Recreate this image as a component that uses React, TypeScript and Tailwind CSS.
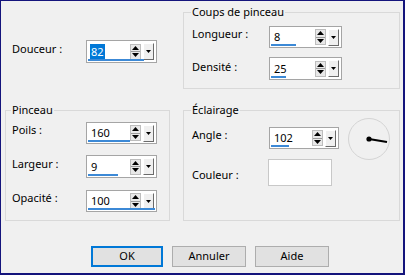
import React from 'react'

interface SpinProps {
  value: string
  bar: number
  className: string
  selected?: boolean
}

const Spin: React.FC<SpinProps> = ({ value, bar, className, selected }) => (
  <div className={`relative flex items-center border border-[#a5a5a5] bg-white pr-[2px] ${className}`}>
    <div className="flex flex-1 items-center pl-[3px] pb-[1px]">
      <span className={selected ? 'bg-[#0078d7] px-[1px] leading-[15px] text-white' : 'px-[1px] leading-[15px]'}>
        {value}
      </span>
    </div>
    <div className="flex h-[16px] w-[11px] flex-col border border-[#bdbdbd] bg-[#e8e8e8]">
      <div className="flex flex-1 items-center justify-center border-b border-[#9a9a9a]">
        <svg width="7" height="4" viewBox="0 0 7 4">
          <polygon points="0,4 3.5,0 7,4" fill="#000" />
        </svg>
      </div>
      <div className="flex flex-1 items-center justify-center">
        <svg width="7" height="4" viewBox="0 0 7 4">
          <polygon points="0,0 3.5,4 7,0" fill="#000" />
        </svg>
      </div>
    </div>
    <div className="ml-[2px] flex h-[17px] w-[11px] items-center justify-center border border-t-white border-l-white border-r-[#6b6b6b] border-b-[#6b6b6b] bg-[#f0f0f0]">
      <svg width="5" height="3" viewBox="0 0 5 3">
        <polygon points="0,0 2.5,3 5,0" fill="#000" />
      </svg>
    </div>
    <div className="absolute bottom-[1px] left-[1px] h-[2px] bg-[#3c89d6]" style={{ width: bar }} />
  </div>
)

const Group: React.FC<{ title: string; className: string; children: React.ReactNode }> = ({ title, className, children }) => (
  <fieldset className={`border border-[#d9d9d9] ${className}`}>
    <legend className="-ml-[1px] px-[1px] leading-[16px]">{title}</legend>
    {children}
  </fieldset>
)

export default function App() {
  return (
    <div
      className="h-[275px] w-[405px] border-t border-l border-r-2 border-b-2 border-[#14147c] bg-[#f0f0f0] text-[11px] text-black"
      style={{ fontFamily: '"Noto Sans", "Open Sans", sans-serif' }}
    >
      <div className="grid grid-cols-[165px_217px] gap-x-[13px] gap-y-[13px] pl-[4px] pt-[3px]">
        {/* Douceur */}
        <div className="flex items-start pl-[7px] pt-[36px]">
          <span className="w-[74px] pt-[1px]">Douceur :</span>
          <Spin value="82" bar={56} selected className="h-[23px] w-[71px]" />
        </div>

        <Group title="Coups de pinceau" className="h-[85px] pl-[8px]">
          <div className="mt-[6px] flex items-start">
            <span className="w-[77px]">Longueur :</span>
            <Spin value="8" bar={25} className="h-[22px] w-[73px]" />
          </div>
          <div className="mt-[9px] flex items-start">
            <span className="w-[77px] pt-[2px]">Densité :</span>
            <Spin value="25" bar={15} className="h-[23px] w-[73px]" />
          </div>
        </Group>

        <Group title="Pinceau" className="h-[119px] pl-[6px]">
          <div className="mt-[4px] flex items-start">
            <span className="w-[74px]">Poils :</span>
            <Spin value="160" bar={42} className="h-[22px] w-[71px]" />
          </div>
          <div className="mt-[11px] flex items-start">
            <span className="w-[74px] pt-[1px]">Largeur :</span>
            <Spin value="9" bar={30} className="h-[23px] w-[71px]" />
          </div>
          <div className="mt-[12px] flex items-start">
            <span className="w-[74px]">Opacité :</span>
            <Spin value="100" bar={67} className="h-[22px] w-[71px]" />
          </div>
        </Group>

        <Group title="Éclairage" className="h-[119px] pl-[8px]">
          <div className="flex items-start">
            <div className="mt-[9px] flex items-start">
              <span className="w-[77px]">Angle :</span>
              <Spin value="102" bar={18} className="h-[22px] w-[70px]" />
            </div>
            <svg className="ml-[8px] -mt-[1px]" width="44" height="44" viewBox="0 0 44 44">
              <circle cx="22" cy="22" r="20.5" fill="none" stroke="#d4d4d4" strokeWidth="1" />
              <line x1="22" y1="22" x2="40" y2="25" stroke="#000" strokeWidth="2" />
              <circle cx="22" cy="22" r="2.6" fill="#000" />
            </svg>
          </div>
          <div className="-mt-[2px] flex items-start">
            <span className="w-[76px] pt-[8px]">Couleur :</span>
            <div className="h-[27px] w-[64px] border border-[#c8c8c8] bg-white" />
          </div>
        </Group>
      </div>

      <div className="mt-[25px] flex gap-x-[9px] pl-[90px]">
        <button className="h-[21px] w-[72px] border-2 border-[#0078d7] bg-[#e1e1e1]">OK</button>
        <button className="h-[21px] w-[74px] border border-[#adadad] bg-[#e1e1e1]">Annuler</button>
        <button className="h-[21px] w-[74px] border border-[#adadad] bg-[#e1e1e1]">Aide</button>
      </div>
    </div>
  )
}
